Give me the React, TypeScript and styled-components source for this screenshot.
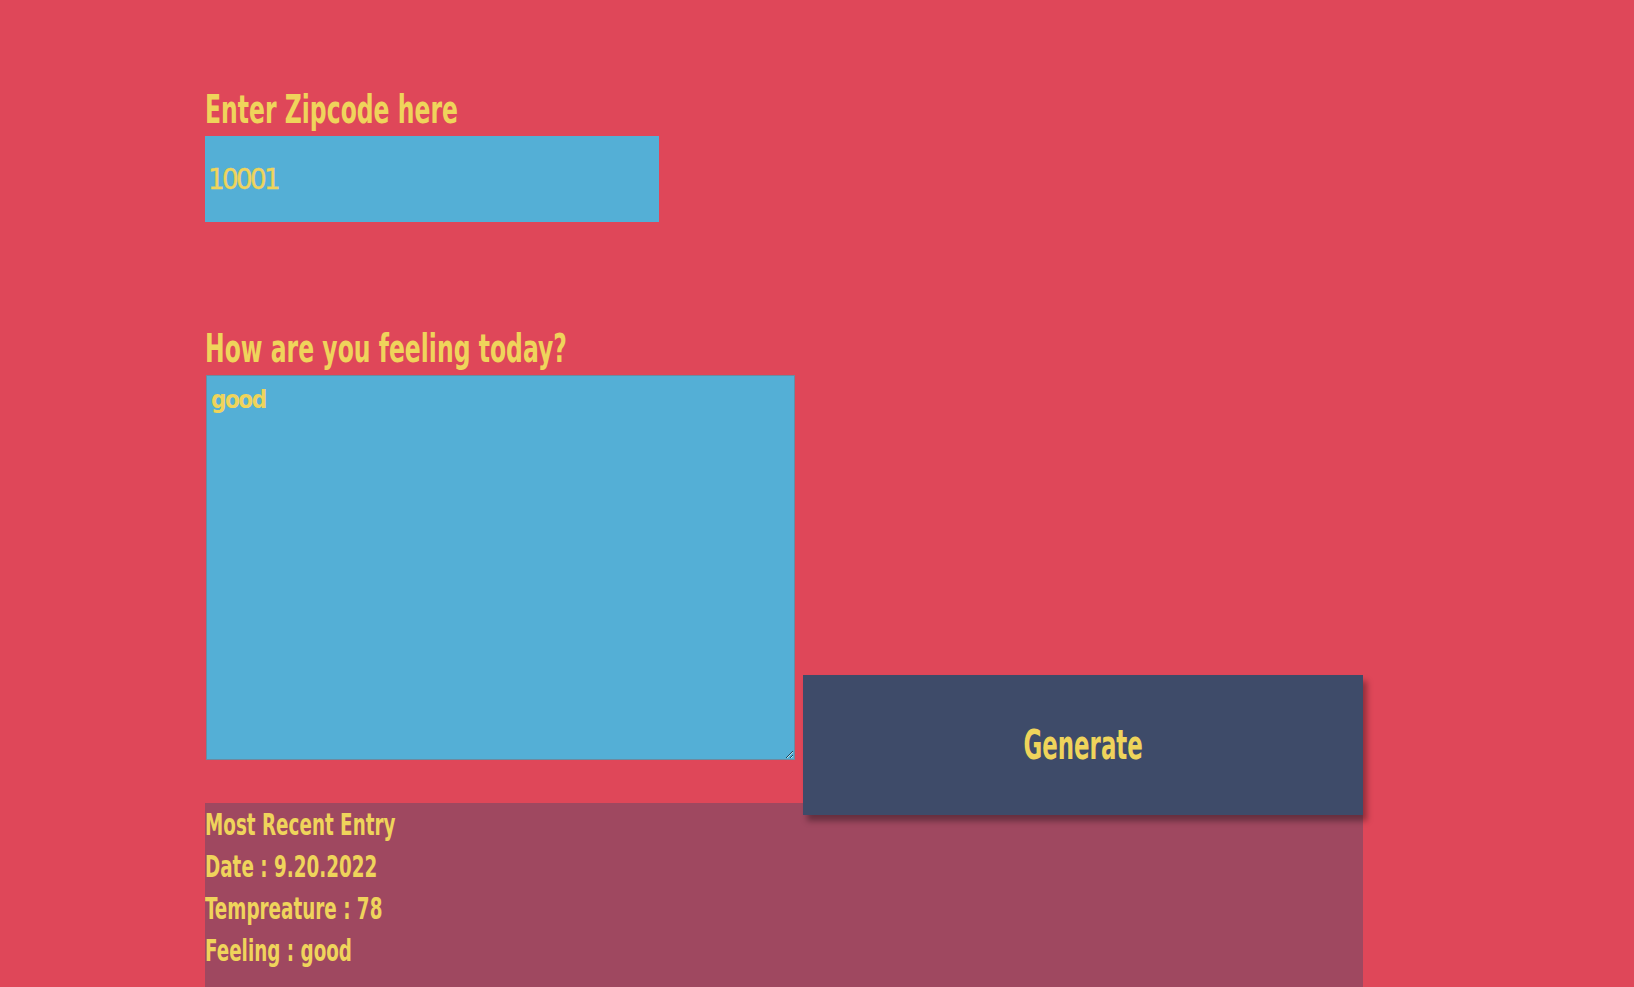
import React from "react";
import styled, { createGlobalStyle } from "styled-components";

const FONT = `"DejaVu Sans Condensed", "DejaVu Sans", sans-serif`;
const YELLOW = "#efd45b";

const Global = createGlobalStyle`
  html, body { margin: 0; padding: 0; background: #df4759; }
  body { font-family: ${FONT}; font-stretch: condensed; color: ${YELLOW}; }
  * { box-sizing: border-box; }
`;

const Page = styled.main`
  padding: 84px 0 0 205px;
  overflow: hidden;
  height: 987px;
`;

const Wrap = styled.div`
  width: 1158px;
  display: flex;
  flex-direction: column;
`;

const Label = styled.label<{ $top?: number }>`
  display: block;
  width: max-content;
  font-family: ${FONT};
  font-stretch: condensed;
  font-size: 39px;
  line-height: 52px;
  font-weight: 700;
  color: ${YELLOW};
  margin-top: ${(p) => p.$top ?? 0}px;
  transform: scaleX(0.67);
  transform-origin: left center;
`;

const ZipInput = styled.input`
  display: block;
  width: 454px;
  height: 86px;
  border: none;
  outline: none;
  background: #54afd6;
  color: ${YELLOW};
  font-family: ${FONT};
  font-stretch: condensed;
  font-size: 29px;
  letter-spacing: -2.6px;
  padding: 0 3px;
  -webkit-text-stroke: 0.4px ${YELLOW};
`;

const Row = styled.div`
  display: flex;
  align-items: flex-start;
  gap: 8px;
`;

const Feel = styled.textarea`
  display: block;
  width: 590px;
  height: 385px;
  margin: 0 0 0 1px;
  border: 1px solid #6c8aa0;
  background: #54afd6;
  color: ${YELLOW};
  font-family: ${FONT};
  font-stretch: condensed;
  font-weight: 700;
  font-size: 24px;
  letter-spacing: -1.5px;
  padding: 10px 4px;
  outline: none;
`;

const Generate = styled.button`
  position: relative;
  z-index: 2;
  width: 560px;
  height: 140px;
  margin-top: 300px;
  margin-bottom: -55px;
  border: none;
  background: #3e4b69;
  box-shadow: 4px 6px 6px rgba(0, 0, 0, 0.35);
  cursor: pointer;
  display: flex;
  align-items: center;
  justify-content: center;
  padding: 0;
`;

const ButtonText = styled.span`
  display: inline-block;
  color: ${YELLOW};
  font-family: ${FONT};
  font-stretch: condensed;
  font-weight: 700;
  font-size: 41px;
  transform: scaleX(0.62);
`;

const Results = styled.section`
  margin-top: 43px;
  background: #9f4860;
  min-height: 200px;
  padding-top: 1px;
`;

const Line = styled.div`
  width: max-content;
  font-family: ${FONT};
  font-stretch: condensed;
  font-weight: 700;
  font-size: 30px;
  line-height: 42px;
  color: ${YELLOW};
  transform: scaleX(0.68);
  transform-origin: left center;
`;

export default function App() {
  return (
    <>
      <Global />
      <Page>
        <Wrap>
          <Label htmlFor="zip">Enter Zipcode here</Label>
          <ZipInput id="zip" defaultValue="10001" />
          <Label htmlFor="feelings" $top={101}>How are you feeling today?</Label>
          <Row>
            <Feel id="feelings" defaultValue="good" />
            <Generate>
              <ButtonText>Generate</ButtonText>
            </Generate>
          </Row>
          <Results>
            <Line>Most Recent Entry</Line>
            <Line>Date : 9.20.2022</Line>
            <Line>Tempreature : 78</Line>
            <Line>Feeling : good</Line>
          </Results>
        </Wrap>
      </Page>
    </>
  );
}
